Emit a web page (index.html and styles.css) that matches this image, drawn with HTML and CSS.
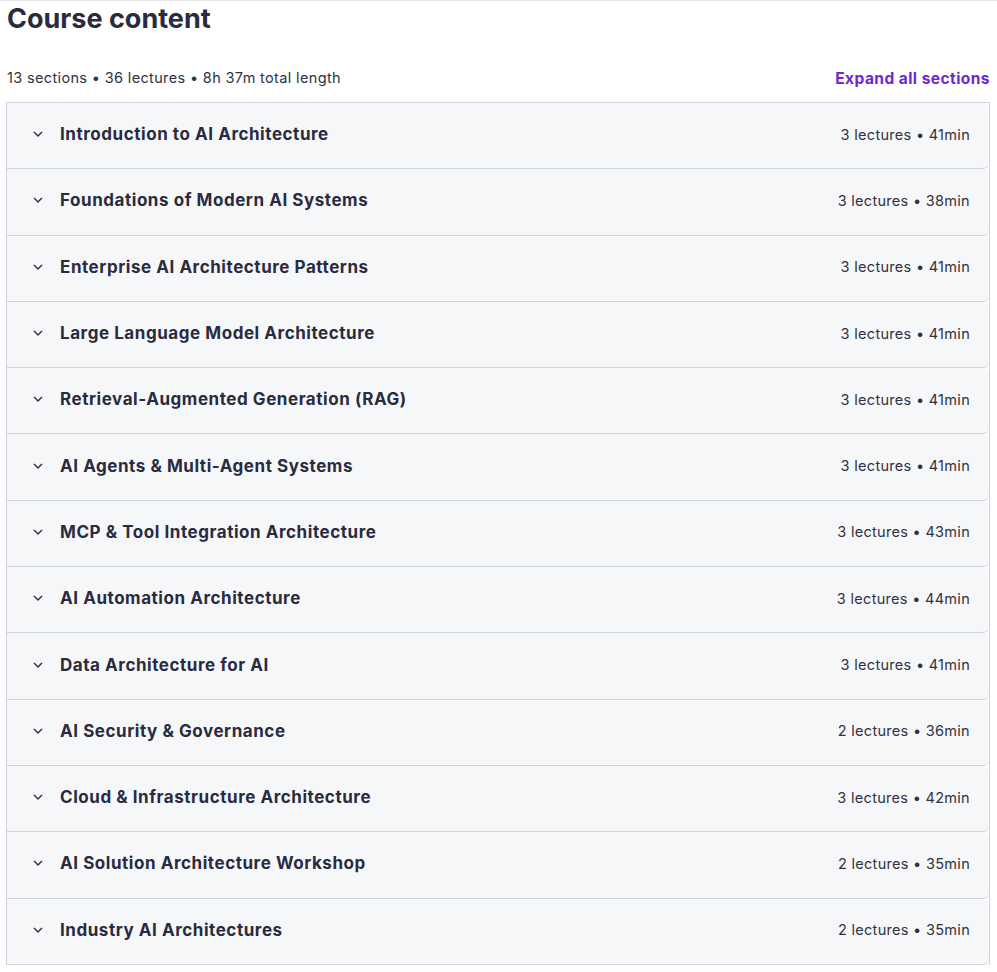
FILE: index.html
```html
<!DOCTYPE html>
<html lang="en">
<head>
<meta charset="utf-8">
<title>Course content</title>
<link rel="stylesheet" href="styles.css">
</head>
<body>
<div class="page">
  <h2 class="title">Course content</h2>
  <div class="meta-row">
    <span class="meta">13 sections • 36 lectures • 8h 37m total length</span>
    <button class="expand">Expand all sections</button>
  </div>
  <div class="panel">
    <div class="section"><svg class="chev" viewBox="0 0 24 24"><path d="M6.5 9.5l5.5 5.5 5.5-5.5"/></svg><span class="name">Introduction to AI Architecture</span><span class="info">3 lectures • 41min</span></div>
    <div class="section"><svg class="chev" viewBox="0 0 24 24"><path d="M6.5 9.5l5.5 5.5 5.5-5.5"/></svg><span class="name">Foundations of Modern AI Systems</span><span class="info">3 lectures • 38min</span></div>
    <div class="section"><svg class="chev" viewBox="0 0 24 24"><path d="M6.5 9.5l5.5 5.5 5.5-5.5"/></svg><span class="name">Enterprise AI Architecture Patterns</span><span class="info">3 lectures • 41min</span></div>
    <div class="section"><svg class="chev" viewBox="0 0 24 24"><path d="M6.5 9.5l5.5 5.5 5.5-5.5"/></svg><span class="name">Large Language Model Architecture</span><span class="info">3 lectures • 41min</span></div>
    <div class="section"><svg class="chev" viewBox="0 0 24 24"><path d="M6.5 9.5l5.5 5.5 5.5-5.5"/></svg><span class="name">Retrieval-Augmented Generation (RAG)</span><span class="info">3 lectures • 41min</span></div>
    <div class="section"><svg class="chev" viewBox="0 0 24 24"><path d="M6.5 9.5l5.5 5.5 5.5-5.5"/></svg><span class="name">AI Agents &amp; Multi-Agent Systems</span><span class="info">3 lectures • 41min</span></div>
    <div class="section"><svg class="chev" viewBox="0 0 24 24"><path d="M6.5 9.5l5.5 5.5 5.5-5.5"/></svg><span class="name">MCP &amp; Tool Integration Architecture</span><span class="info">3 lectures • 43min</span></div>
    <div class="section"><svg class="chev" viewBox="0 0 24 24"><path d="M6.5 9.5l5.5 5.5 5.5-5.5"/></svg><span class="name">AI Automation Architecture</span><span class="info">3 lectures • 44min</span></div>
    <div class="section"><svg class="chev" viewBox="0 0 24 24"><path d="M6.5 9.5l5.5 5.5 5.5-5.5"/></svg><span class="name">Data Architecture for AI</span><span class="info">3 lectures • 41min</span></div>
    <div class="section"><svg class="chev" viewBox="0 0 24 24"><path d="M6.5 9.5l5.5 5.5 5.5-5.5"/></svg><span class="name">AI Security &amp; Governance</span><span class="info">2 lectures • 36min</span></div>
    <div class="section"><svg class="chev" viewBox="0 0 24 24"><path d="M6.5 9.5l5.5 5.5 5.5-5.5"/></svg><span class="name">Cloud &amp; Infrastructure Architecture</span><span class="info">3 lectures • 42min</span></div>
    <div class="section"><svg class="chev" viewBox="0 0 24 24"><path d="M6.5 9.5l5.5 5.5 5.5-5.5"/></svg><span class="name">AI Solution Architecture Workshop</span><span class="info">2 lectures • 35min</span></div>
    <div class="section"><svg class="chev" viewBox="0 0 24 24"><path d="M6.5 9.5l5.5 5.5 5.5-5.5"/></svg><span class="name">Industry AI Architectures</span><span class="info">2 lectures • 35min</span></div>
  </div>
</div>
</body>
</html>
```
FILE: styles.css
```css
* { box-sizing: border-box; }
html, body { margin: 0; padding: 0; background: #fff; }
body {
  font-family: Inter, "Noto Sans", sans-serif;
  color: #2a2b3f;
  border-top: 1px solid #e8e9eb;
}
.page {
  padding: 0 7px 0 6px;
}
.title {
  margin: 0;
  padding: 2px 0 0 1px;
  font-size: 27px;
  line-height: 32px;
  font-weight: 700;
  letter-spacing: 0;
}
.meta-row {
  display: flex;
  justify-content: space-between;
  align-items: center;
  margin-top: 31px;
  height: 22px;
  padding-left: 1px;
}
.meta {
  font-size: 14.5px;
  letter-spacing: 0.35px;
  color: #303141;
}
.expand {
  border: 0;
  background: none;
  padding: 0;
  font-family: inherit;
  font-size: 15.5px;
  letter-spacing: 0.45px;
  font-weight: 700;
  color: #6d28d2;
  cursor: pointer;
  position: relative;
  top: 1px;
}
.panel {
  margin-top: 14px;
  border: 1px solid #d1d2e0;
  border-bottom: 0;
}
.section {
  display: flex;
  align-items: center;
  height: 66.3px;
  background: #f6f7f9;
  border-bottom: 1px solid #d1d2e0;
  padding: 0 19px 3px 24px;
  border-radius: 0 6px 6px 0;
}
.chev {
  width: 16px;
  height: 16px;
  fill: none;
  stroke: #2a2b3f;
  stroke-width: 2;
  stroke-linecap: round;
  stroke-linejoin: round;
  flex: none;
  margin-left: -1px;
}
.name {
  margin-left: 14px;
  font-size: 17px;
  letter-spacing: 0.55px;
  font-weight: 700;
  flex: 1;
}
.info {
  font-size: 14.5px;
  letter-spacing: 0.3px;
  color: #303141;
}
```
